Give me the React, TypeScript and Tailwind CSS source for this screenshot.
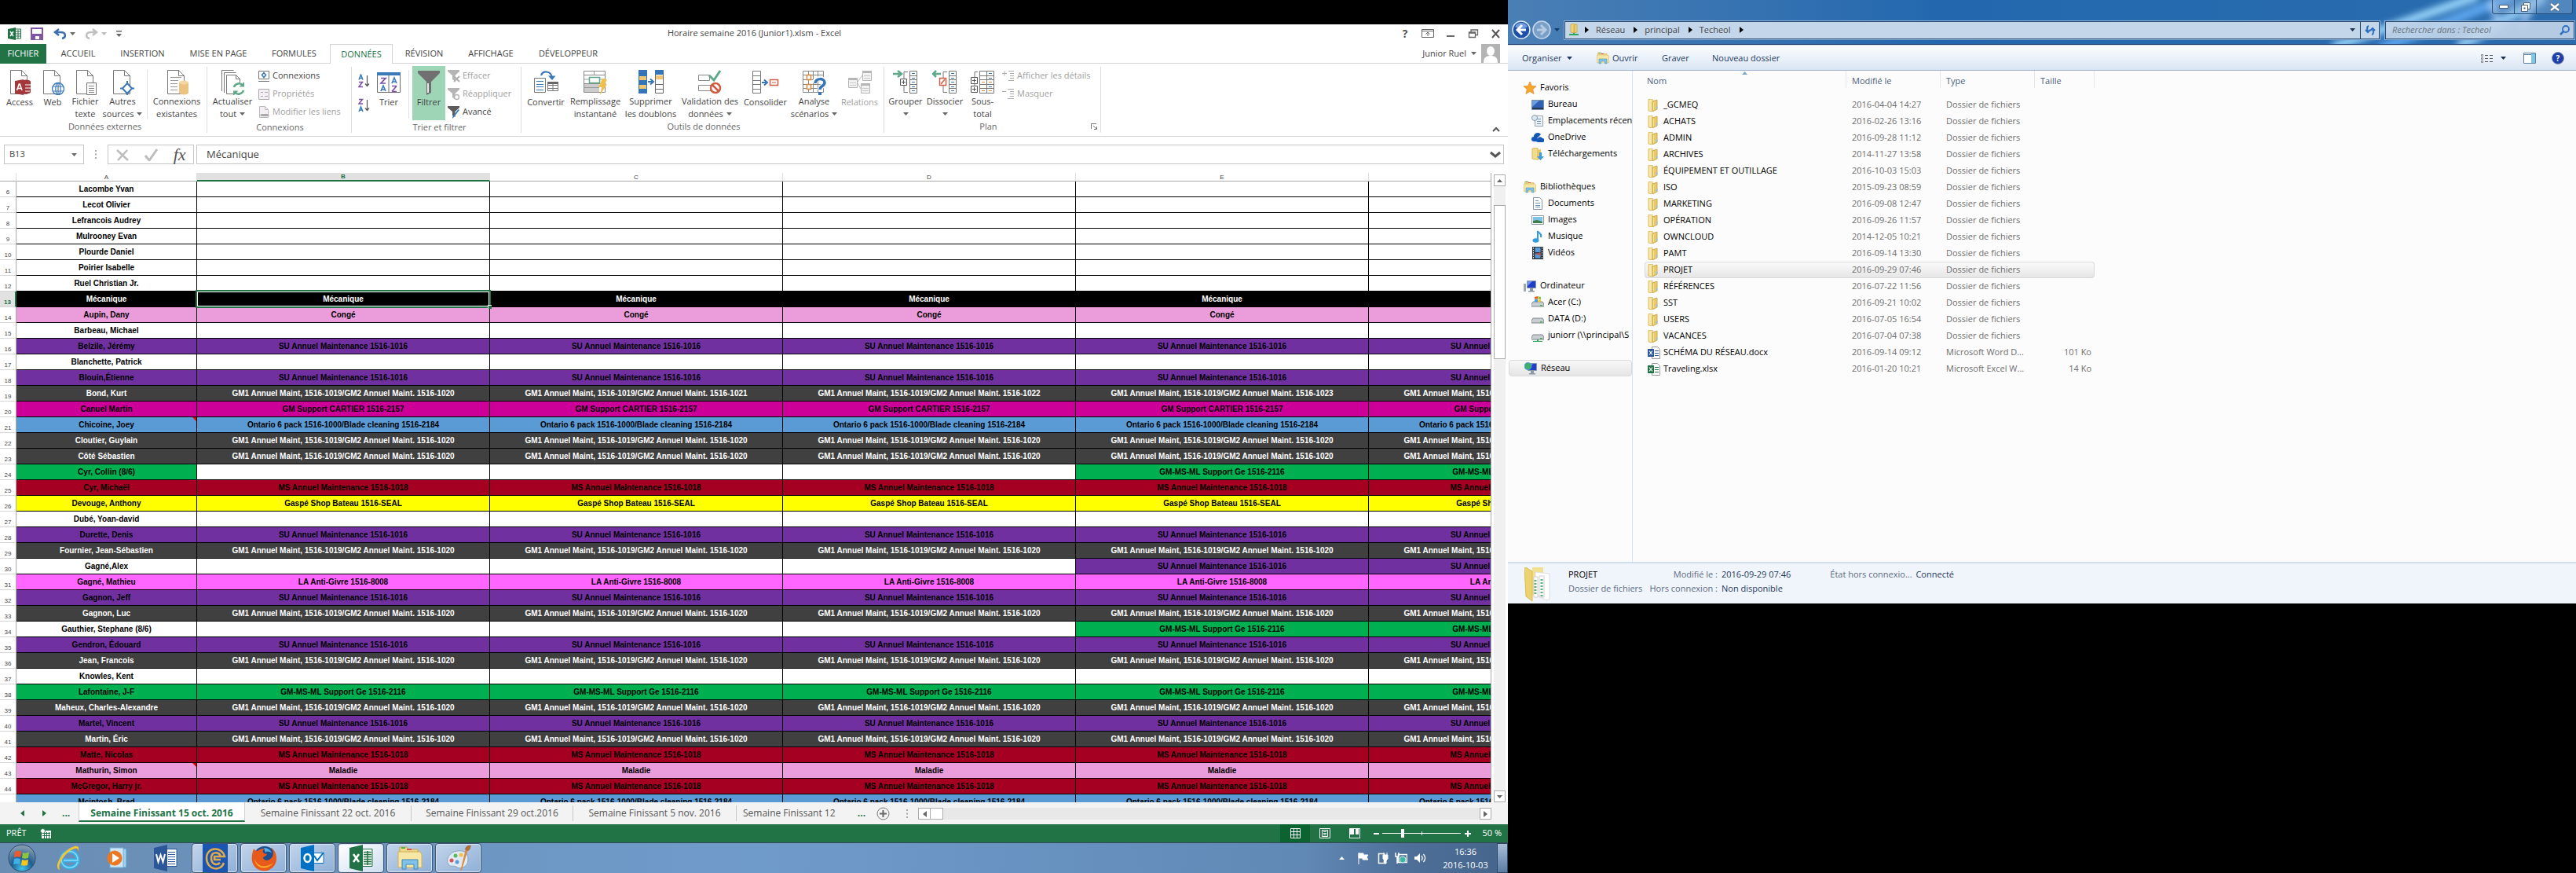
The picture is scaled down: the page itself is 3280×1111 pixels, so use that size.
import React from "react";
import type { ReactNode } from "react";
import clsx from "clsx";

type Children = { children?: ReactNode };
type SvgProps = Children & { w: number; h: number; box?: string };

const Svg = ({ w, h, box, children }: SvgProps) => (
  <svg width={w} height={h} viewBox={box ?? `0 0 ${w} ${h}`} fill="none" aria-hidden="true" className="shrink-0">
    {children}
  </svg>
);

const Caret = ({ color = "#666", up }: { color?: string; up?: boolean }) => (
  <Svg w={7} h={4}>
    <path d={up ? "M0 4h7L3.5 0z" : "M0 0h7L3.5 4z"} fill={color} />
  </Svg>
);

/* ------------------------ RIBBON ICONS ----------------------- */
const Page = () => <path d="M4.500 .5h14l7 7v23h-21zM18.500 .5v7h7" fill="#fff" stroke="#777" />;

const AccessIcon = () => (
  <Svg w={32} h={32}>
    <Page />
    <ellipse cx="24" cy="15" rx="6" ry="2.500" fill="#a4373a" />
    <path d="M18 15h12v13a6 2.500 0 0 1-12 0z" fill="#a4373a" />
    <path d="M23 19h7M23 23h7M23 27h6" stroke="#fff" />
    <path d="M10 14l11-2v20l-11-2z" fill="#a4373a" />
    <path d="M12.500 26l2.800-8h1l2.700 8M13.500 23.500h4.500" stroke="#fff" strokeWidth="1.600" />
  </Svg>
);

const WebIcon = () => (
  <Svg w={32} h={32}>
    <Page />
    <circle cx="23" cy="24" r="7.500" fill="#fff" stroke="#3a78b8" strokeWidth="1.300" />
    <ellipse cx="23" cy="24" rx="3.200" ry="7.500" stroke="#3a78b8" strokeWidth="1.200" />
    <path d="M16 21h14M16 27h14M23 17v14" stroke="#3a78b8" strokeWidth="1.200" />
  </Svg>
);

const TextFileIcon = () => (
  <Svg w={32} h={32}>
    <Page />
    <path d="M17.500 16.500h12v15h-12z" fill="#fff" stroke="#777" />
    <path d="M20 20.500h7M20 23.500h7M20 26.500h7M20 28.500h7" stroke="#888" />
  </Svg>
);

const SourcesIcon = () => (
  <Svg w={32} h={32}>
    <Page />
    <path d="M22 17l6 6.500-6 6.500-6-6.500z" fill="#fff" stroke="#3a78b8" strokeWidth="2" />
    <path d="M22 14v4M22 28v4M13 23.500h4M27 23.500h4" stroke="#3a78b8" strokeWidth="2" />
  </Svg>
);

const ExistingIcon = () => (
  <Svg w={32} h={32}>
    <Page />
    <path d="M8 9.500h14M8 13.500h10M8 17.500h9M8 21.500h9M8 25.500h9" stroke="#999" />
    <path d="M19 16v13a6 2.500 0 0 0 12 0V16z" fill="#eac282" />
    <ellipse cx="25" cy="16" rx="6" ry="2.500" fill="#f3d6a4" />
  </Svg>
);

const RefreshIcon = () => (
  <Svg w={32} h={32}>
    <path d="M2.500 27V.5h15M5.500 29V3.500h15" stroke="#777" />
    <path d="M8.500 6.500h12l5 5v19h-17zM20.500 6.500v5h5" fill="#fff" stroke="#777" />
    <circle cx="24" cy="24" r="8" fill="#fff" />
    <path d="M18 22a6.500 6.500 0 0 1 11-2.500M30 26a6.500 6.500 0 0 1-11 2.500" stroke="#5fa98a" strokeWidth="2.500" />
    <path d="M31 15v6.500h-6.500zM17 33v-6.500h6.500z" fill="#5fa98a" />
  </Svg>
);

const SortBigIcon = () => (
  <Svg w={30} h={28}>
    <path d="M.5 1.500h29v25H.5z" fill="#fff" stroke="#6d6d6d" />
    <path d="M0 1h30v4H0z" fill="#3a78b8" />
    <path d="M15 5v22" stroke="#6d6d6d" />
    <path d="M5 8.500h6L5 15h6M19 25.500h6M25 18.500h-6M25 18.500l-6 7" stroke="#7b4fa8" strokeWidth="1.700" />
    <path d="M5 25l3-7 3 7M6 23h4M19 15l3-7 3 7M20 13h4" stroke="#3a78b8" strokeWidth="1.600" />
  </Svg>
);

const SortIcon = ({ desc }: { desc?: boolean }) => (
  <Svg w={16} h={18}>
    <path
      d={desc ? "M1 17l2.500-6L6 17M2 15h3" : "M1 7.500L3.500 1 6 7.500M2 5.500h3"}
      stroke="#3a78b8"
      strokeWidth="1.500"
    />
    <path d={desc ? "M1 1.500h4.500L1 7h5" : "M1 10.500h4.500L1 16.500h5"} stroke="#7b4fa8" strokeWidth="1.500" />
    <path d="M11.500 2v13M9 12.500l2.500 3 2.500-3" stroke="#555" strokeWidth="1.200" />
  </Svg>
);

const FunnelIcon = () => (
  <Svg w={30} h={32}>
    <path d="M1 1h28v3L18 15v14l-6 3V15L1 4z" fill="#707070" />
    <path d="M14 17v12" stroke="#e8e8e8" strokeWidth="2" />
  </Svg>
);

const FunnelSmall = ({ kind }: { kind: "clear" | "again" | "more" }) => (
  <Svg w={16} h={16}>
    <path d="M0 0h15v2L9.500 7v7L6 12V7L0 2z" fill={kind === "more" ? "#5c5c5c" : "#b5b5b5"} />
    {kind === "clear" && <path d="M8 8l7 7M15 8l-7 7" stroke="#b0b0b0" strokeWidth="2" />}
    {kind === "again" && <circle cx="11.500" cy="11.500" r="3" fill="#fff" stroke="#b5b5b5" strokeWidth="1.500" />}
    {kind === "more" && <path d="M15 5l-7 9-2 2 .5-3 7-9z" fill="#3a78b8" />}
  </Svg>
);

const ConvertIcon = () => (
  <Svg w={32} h={32}>
    <path d="M1.500 10.500h14v18h-14z" fill="#fff" stroke="#777" />
    <path d="M4 14.500h9M4 18.500h9M4 21.500h9M4 25.500h9" stroke="#3a78b8" />
    <path d="M18.500 15.500h13v11h-13zM25 15v12M18 19.500h13M18 23.500h13" stroke="#777" />
    <path d="M18 15h14v3H18z" fill="#666" />
    <path d="M10 7c2-6 12-7 14 3" stroke="#3a78b8" strokeWidth="2.200" />
    <path d="M19 7.500h9.500L24 13z" fill="#3a78b8" />
  </Svg>
);

const FlashIcon = () => (
  <Svg w={32} h={32}>
    <path d="M1.500 1.500h27v27h-27zM1 6.500h28M1 17.500h28" stroke="#888" />
    <path d="M2 18h19v10H2z" fill="#ccc" />
    <path d="M1 22.500h20M14.500 1v6M1 12h27" stroke="#999" />
    <path d="M8.500 9.500h13v7h-13z" fill="#fff" stroke="#5fa98a" strokeWidth="1.500" />
    <path d="M25 11l6 1-3 6h3L22 32l2-10h-4z" fill="#f0c04f" />
  </Svg>
);

const DedupeIcon = () => (
  <Svg w={32} h={32}>
    <path d="M0 0h11v30H0z" fill="#3574b6" />
    <path d="M1 8h9v5H1zM1 19h9v5H1z" fill="#f0c673" />
    <path d="M21.500 .5h10v29h-10z" fill="#fff" stroke="#666" />
    <path d="M21 0h11v6H21z" fill="#3574b6" />
    <path d="M22 7h9v5h-9z" fill="#f0c673" />
    <path d="M21 18.500h11M21 24.500h11" stroke="#666" />
    <path d="M12 15h6M15 11.500l4 3.500-4 3.500" stroke="#3574b6" strokeWidth="2" />
  </Svg>
);

const ValidateIcon = () => (
  <Svg w={32} h={32}>
    <path d="M1.500 6.500h14v7h-14zM1.500 19.500h16v7h-16z" fill="#fff" stroke="#888" />
    <path d="M15 7l6 6L29 1" stroke="#5fa98a" strokeWidth="3" />
    <circle cx="23" cy="23" r="6" fill="#fff" stroke="#cf5b43" strokeWidth="2.500" />
    <path d="M19 19l8 8" stroke="#cf5b43" strokeWidth="2.500" />
  </Svg>
);

const ConsolidateIcon = () => (
  <Svg w={34} h={30}>
    <path d="M.5 .5h10v28H.5zM0 6.500h11M0 12.500h11M0 17.500h11M0 23.500h11" stroke="#777" />
    <path d="M12 15h5M15 11.500l4 3.500-4 3.500" stroke="#3574b6" strokeWidth="2" />
    <path d="M22.500 11.500h10v7h-10z" fill="#fff" stroke="#cf5b43" strokeWidth="1.500" />
    <path d="M25 15h5" stroke="#cf5b43" />
  </Svg>
);

const WhatIfIcon = () => (
  <Svg w={32} h={32}>
    <path d="M1.500 1.500h26v27h-26zM1 6.500h27M1 12.500h27M1 18.500h27M1 23.500h20M8.500 1v28M14.500 1v28M20.500 1v28" stroke="#888" />
    <path d="M6.500 6.500h5v6h-5zM6.500 18.500h5v6h-5z" fill="#fff" stroke="#d8873c" strokeWidth="1.500" />
    <path d="M16 17c0-8 13-8 13-1 0 5-6 4-6 9" stroke="#fff" strokeWidth="6" />
    <path d="M17 17c0-7 12-7 12-1 0 5-6 4-6 9" stroke="#3574b6" strokeWidth="3.500" />
    <path d="M21 28h4v4h-4z" fill="#3574b6" />
  </Svg>
);

const RelationsIcon = () => (
  <Svg w={32} h={32}>
    <path d="M13 15l6-8M13 17l4 7" stroke="#bbb" />
    <path d="M1.500 10.500h11v12h-11zM19.500 1.500h11v12h-11zM17.500 17.500h11v12h-11z" fill="#f2f2f2" stroke="#b5b5b5" />
    <path d="M1 10h12v3H1zM19 1h12v3H19zM17 17h12v3H17z" fill="#b5b5b5" />
    <path d="M3 16.500h8M3 19.500h8M21 7.500h8M21 10.500h8M19 23.500h8M19 26.500h8" stroke="#c8c8c8" />
  </Svg>
);

const OutlineIcon = ({ mode }: { mode: "group" | "ungroup" | "subtotal" }) => (
  <Svg w={32} h={32}>
    <path d="M21.500 1.500h9v28h-9zM21 7.500h10M21 12.500h10M21 18.500h10M21 23.500h10" fill="#fff" stroke="#777" />
    <path d="M24 4.500h4M24 10.500h4M24 15.500h4M24 21.500h4M24 26.500h4" stroke="#3574b6" />
    {mode === "group" && (
      <>
        <path d="M19 2.500h-5v9M14 19v9.500h5" stroke="#777" />
        <path d="M9.500 11.500h8v8h-8zM11 15.500h5M13.500 13v5" fill="#fff" stroke="#555" />
        <path d="M0 5h9M6 1l5 4-5 4" stroke="#5fa98a" strokeWidth="2.500" />
      </>
    )}
    {mode === "ungroup" && (
      <>
        <path d="M19 2.500h-5v9M14 19v9.500h5" stroke="#777" />
        <path d="M9.500 10.500h8v9h-8z" fill="#fff" stroke="#cf5b43" strokeWidth="1.500" />
        <path d="M11 18l5-6" stroke="#cf5b43" strokeWidth="1.500" />
        <path d="M2 5h9M5 1L1 5l4 4" stroke="#5fa98a" strokeWidth="2.500" />
      </>
    )}
    {mode === "subtotal" && (
      <>
        <path d="M12.500 1.500h9v28h-9zM12 7.500h10M12 12.500h10M12 18.500h10M12 23.500h10M10 2.500H6V10M6 18v3" fill="#fff" stroke="#777" />
        <path d="M15 15.500h4M24 15.500h4M15 26.500h4M24 26.500h4" stroke="#d8873c" />
        <path d="M1.500 9.500h8v8h-8zM1.500 20.500h8v8h-8zM3 13.500h5M5.500 11v5M3 24.500h5M5.500 22v5" fill="#fff" stroke="#555" />
      </>
    )}
  </Svg>
);

const LinkIcon = ({ kind }: { kind: "conn" | "props" | "edit" | "show" | "hide" }) => (
  <Svg w={16} h={16}>
    {kind === "conn" && (
      <>
        <path d="M1.500 1.500h13v10h-13zM1 14.500h14" fill="#fff" stroke="#777" />
        <path d="M8 3.500l2.500 3L8 9.500l-2.500-3z" stroke="#3574b6" strokeWidth="1.500" />
      </>
    )}
    {kind === "props" && (
      <>
        <path d="M1.500 1.500h13v13h-13z" fill="#f3eff5" stroke="#aaa" />
        <path d="M4 5.500h3M9 5.500h4M4 10.500h3M9 10.500h4" stroke="#aaa" />
      </>
    )}
    {kind === "edit" && (
      <>
        <path d="M2.500 .5h7l4 4v10h-11zM9.500 .5v4h4" fill="#f3eff5" stroke="#bbb" />
        <path d="M5 11.500h4M9 11.500h4" stroke="#aaa" strokeWidth="3" strokeLinecap="round" />
      </>
    )}
    {kind === "show" && <path d="M0 4.500h6M3 1.500v6M8 1.500h7M10 4.500h5M10 7.500h5M10 10.500h5M8 13.500h7" stroke="#aaa" />}
    {kind === "hide" && <path d="M0 4.500h5M7 1.500h8M10 4.500h5M10 7.500h5M10 10.500h5M7 13.500h8" stroke="#aaa" />}
  </Svg>
);

/* ------------------------ RIBBON PARTS ----------------------- */
type BigProps = { icon: ReactNode; lines: string[]; caret?: boolean; className: string; muted?: boolean };

const BigButton = ({ icon, lines, caret, className, muted }: BigProps) => (
  <button
    disabled={muted}
    className={clsx(
      "mt-[3px] flex h-[69px] shrink-0 flex-col items-center whitespace-nowrap pt-1 leading-4",
      muted ? "text-[#a0a0a0]" : "text-[#444]",
      className,
    )}>
    <span className="flex h-[34px] items-center">{icon}</span>
    {lines.map((line, i) => (
      <span key={line} className="flex h-4 items-center gap-1">
        {line}
        {caret && i === lines.length - 1 && <Caret />}
      </span>
    ))}
  </button>
);

const SmallButton = ({ icon, label, muted }: { icon: ReactNode; label: string; muted?: boolean }) => (
  <button
    disabled={muted}
    className={clsx("flex h-[23px] items-center gap-[3px] whitespace-nowrap", muted ? "text-[#a0a0a0]" : "text-[#444]")}>
    {icon}
    {label}
  </button>
);

const Group = ({ label, className, children, launcher }: Children & { label: string; className: string; launcher?: boolean }) => (
  <section aria-label={label} className={clsx("my-1 flex shrink-0 flex-col border-r border-[#dcdcdc]", className)}>
    <div className="-mt-1 flex h-[76px]">{children}</div>
    <div className="flex h-4 items-center justify-center text-[#666]">
      <span className={clsx(launcher && "ml-auto")}>{label}</span>
      {launcher && (
        <button aria-label="Options du plan" className="mr-1 ml-auto">
          <Svg w={8} h={8}>
            <path d="M.5 7V.5H7M3 3l4 4M7.500 4v3.500H4" stroke="#777" />
          </Svg>
        </button>
      )}
    </div>
  </section>
);

const ribbonTabs = [
  { name: "FICHIER", cls: "w-[59px] bg-[#217346] text-white" },
  { name: "ACCUEIL", cls: "w-[81px] text-[#444]" },
  { name: "INSERTION", cls: "w-[83px] text-[#444]" },
  { name: "MISE EN PAGE", cls: "w-[110px] text-[#444]" },
  { name: "FORMULES", cls: "w-[83px] text-[#444]" },
  { name: "DONNÉES", cls: "ml-1 w-[80px] border border-b-0 border-[#d4d4d4] bg-white text-[#217346]" },
  { name: "RÉVISION", cls: "w-[80px] text-[#444]" },
  { name: "AFFICHAGE", cls: "w-[90px] text-[#444]" },
  { name: "DÉVELOPPEUR", cls: "w-[107px] text-[#444]" },
];

const TitleBar = () => (
  <header className="flex h-[25px] items-center bg-white pr-[7px] pb-[2px] pl-[10px] text-[11px]">
    <div className="flex w-[150px] items-center">
      <Svg w={17} h={16}>
        <path d="M9 2h7.500v12H9z" fill="#fff" stroke="#217346" />
        <path d="M10 5h6M10 8h6M10 11h6M13 3v11" stroke="#217346" />
        <path d="M0 2l10-2v16L0 14z" fill="#217346" />
        <path d="M3 5l4 6M7 5l-4 6" stroke="#fff" strokeWidth="1.500" />
      </Svg>
      <button aria-label="Enregistrer" className="ml-3">
        <Svg w={16} h={16}>
          <path d="M1 1h14v14H1z" fill="#fff" stroke="#8055a5" strokeWidth="2" />
          <path d="M1 8h14v7H1z" fill="#8055a5" />
          <path d="M6 11h5v4H6z" fill="#fff" />
        </Svg>
      </button>
      <button aria-label="Annuler" className="ml-[13px] flex items-center gap-1">
        <Svg w={17} h={14}>
          <path d="M3 5h6c8 0 7 7 2 8M7 1L2 5l5 4" stroke="#3a6fb0" strokeWidth="2.500" />
        </Svg>
        <Caret />
      </button>
      <button aria-label="Rétablir" className="ml-3 flex items-center gap-1">
        <Svg w={17} h={14}>
          <path d="M14 5H8C0 5 1 12 6 13M10 1l5 4-5 4" stroke="#c0c0c0" strokeWidth="2.500" />
        </Svg>
        <Caret color="#bbb" />
      </button>
      <button aria-label="Personnaliser la barre d'accès rapide" className="ml-3">
        <Svg w={7} h={8}>
          <path d="M0 0h7v1.500H0zM0 4h7L3.500 8z" fill="#666" />
        </Svg>
      </button>
    </div>
    <h1 className="flex-1 pr-[20px] text-center text-[#444]">Horaire semaine 2016 (Junior1).xlsm - Excel</h1>
    <div className="flex items-center gap-[13px] text-[#555]">
      <button aria-label="Aide" className="w-4 text-[14px] leading-4 font-bold">
        ?
      </button>
      <button aria-label="Options du ruban">
        <Svg w={16} h={12}>
          <path d="M.5 .5h15v10H.5zM1 2.500h14M8 9V4M5.500 6.500L8 4l2.500 2.500" stroke="#666" />
        </Svg>
      </button>
      <button aria-label="Réduire">
        <Svg w={16} h={12}>
          <path d="M3 8h10v2H3z" fill="#666" />
        </Svg>
      </button>
      <button aria-label="Restaurer">
        <Svg w={16} h={12}>
          <path d="M2.500 4h8v6.500h-8zM5 3.500V1h8.500v6.500H11M2 5h9" stroke="#666" strokeWidth="1.300" />
        </Svg>
      </button>
      <button aria-label="Fermer">
        <Svg w={16} h={12}>
          <path d="M3 1l9 10M12 1L3 11" stroke="#555" strokeWidth="2" />
        </Svg>
      </button>
    </div>
  </header>
);

const Ribbon = () => (
  <>
    <nav className="flex h-[25px] border-b border-[#d4d4d4] bg-white pr-[10px] text-[11px]">
      {ribbonTabs.map((tab) => (
        <button key={tab.name} className={clsx("-mb-px h-[25px] shrink-0 whitespace-nowrap", tab.cls)}>
          {tab.name}
        </button>
      ))}
      <button className="ml-auto flex items-center gap-[6px] text-[#444]">
        Junior Ruel
        <Caret />
        <Svg w={24} h={24}>
          <path d="M0 0h24v24H0z" fill="#b3b3b3" />
          <ellipse cx="12" cy="9" rx="5" ry="6" fill="#fff" />
          <path d="M3 24c0-7 3-8 7-9h4c4 1 7 2 7 9z" fill="#fff" />
        </Svg>
      </button>
    </nav>

    <div className="flex h-[93px] border-b border-[#d4d4d4] bg-white text-[11px]">
      <Group label="Données externes" className="w-[264px] pl-1">
        <BigButton className="w-[42px]" icon={<AccessIcon />} lines={["Access"]} />
        <BigButton className="w-[42px]" icon={<WebIcon />} lines={["Web"]} />
        <BigButton className="w-[41px]" icon={<TextFileIcon />} lines={["Fichier", "texte"]} />
        <BigButton className="w-[54px]" icon={<SourcesIcon />} lines={["Autres", "sources"]} caret />
        <div className="mx-1 mt-2 h-[62px] w-px bg-[#e2e2e2]" />
        <BigButton className="w-[66px]" icon={<ExistingIcon />} lines={["Connexions", "existantes"]} />
      </Group>
      <Group label="Connexions" className="w-[184px] pl-[2px]">
        <BigButton className="w-[60px]" icon={<RefreshIcon />} lines={["Actualiser", "tout"]} caret />
        <div className="ml-[2px] pt-1">
          <SmallButton icon={<LinkIcon kind="conn" />} label="Connexions" />
          <SmallButton icon={<LinkIcon kind="props" />} label="Propriétés" muted />
          <SmallButton icon={<LinkIcon kind="edit" />} label="Modifier les liens" muted />
        </div>
      </Group>
      <Group label="Trier et filtrer" className="w-[216px] pl-2">
        <div className="flex w-4 flex-col gap-[13px] pt-[13px]">
          <button aria-label="Trier de A à Z">
            <SortIcon />
          </button>
          <button aria-label="Trier de Z à A">
            <SortIcon desc />
          </button>
        </div>
        <BigButton className="w-[46px]" icon={<SortBigIcon />} lines={["Trier"]} />
        <div className="mr-1 ml-[2px] mt-2 h-[62px] w-px bg-[#e2e2e2]" />
        <BigButton className="w-[42px] bg-[#9fd5b7]" icon={<FunnelIcon />} lines={["Filtrer"]} />
        <div className="ml-[3px] pt-1">
          <SmallButton icon={<FunnelSmall kind="clear" />} label="Effacer" muted />
          <SmallButton icon={<FunnelSmall kind="again" />} label="Réappliquer" muted />
          <SmallButton icon={<FunnelSmall kind="more" />} label="Avancé" />
        </div>
      </Group>
      <Group label="Outils de données" className="w-[462px] pl-[3px]">
        <BigButton className="w-[56px]" icon={<ConvertIcon />} lines={["Convertir"]} />
        <BigButton className="w-[70px]" icon={<FlashIcon />} lines={["Remplissage", "instantané"]} />
        <BigButton className="w-[71px]" icon={<DedupeIcon />} lines={["Supprimer", "les doublons"]} />
        <BigButton className="w-[80px]" icon={<ValidateIcon />} lines={["Validation des", "données"]} caret />
        <BigButton className="w-[61px]" icon={<ConsolidateIcon />} lines={["Consolider"]} />
        <BigButton className="w-[63px]" icon={<WhatIfIcon />} lines={["Analyse", "scénarios"]} caret />
        <BigButton className="w-[53px]" icon={<RelationsIcon />} lines={["Relations"]} muted />
      </Group>
      <Group label="Plan" className="w-[276px] pl-[2px]" launcher>
        <BigButton className="w-[50px]" icon={<OutlineIcon mode="group" />} lines={["Grouper", ""]} caret />
        <BigButton className="w-[50px]" icon={<OutlineIcon mode="ungroup" />} lines={["Dissocier", ""]} caret />
        <BigButton className="w-[46px]" icon={<OutlineIcon mode="subtotal" />} lines={["Sous-", "total"]} />
        <div className="ml-[2px] pt-1">
          <SmallButton icon={<LinkIcon kind="show" />} label="Afficher les détails" muted />
          <SmallButton icon={<LinkIcon kind="hide" />} label="Masquer" muted />
        </div>
      </Group>
      <button aria-label="Réduire le ruban" className="mt-auto mr-[10px] mb-[5px] ml-auto">
        <Svg w={10} h={7}>
          <path d="M1 6l4-4 4 4" stroke="#555" strokeWidth="2" />
        </Svg>
      </button>
    </div>
  </>
);

const FormulaBar = () => (
  <div className="flex bg-white pt-[10px] pr-[5px] pb-[11px] pl-[5px] text-[#444]">
    <div className="flex h-[25px] w-[102px] items-center border border-[#c6c6c6] pr-2 pl-[6px]">
      <input aria-label="Zone Nom" defaultValue="B13" className="w-full min-w-0 text-[11px] outline-none" />
      <Caret />
    </div>
    <div className="flex w-[30px] items-center justify-center">
      <Svg w={2} h={11}>
        <path d="M0 0h2v2H0zM0 4.500h2v2H0zM0 9h2v2H0z" fill="#aaa" />
      </Svg>
    </div>
    <div className="flex h-[25px] w-[110px] items-center justify-around border border-[#c6c6c6]">
      <button aria-label="Annuler la saisie">
        <Svg w={18} h={16}>
          <path d="M2 2l14 13M15 2L3 15" stroke="#bdbdbd" strokeWidth="2.500" />
        </Svg>
      </button>
      <button aria-label="Entrer">
        <Svg w={18} h={16}>
          <path d="M1 9l5 6L16 1" stroke="#bdbdbd" strokeWidth="3" />
        </Svg>
      </button>
      <button aria-label="Insérer une fonction" className="font-['Liberation_Serif',serif] text-[22px] leading-5 text-[#555] italic">
        fx
      </button>
    </div>
    <div className="ml-[3px] flex h-[25px] flex-1 items-center border border-[#c6c6c6] pr-[3px] pl-3">
      <input aria-label="Barre de formule" defaultValue="Mécanique" className="min-w-0 flex-1 text-[13px] outline-none" />
      <Svg w={14} h={9}>
        <path d="M1 2l6 5 6-5" stroke="#555" strokeWidth="3" />
      </Svg>
    </div>
  </div>
);

/* ------------------------ SHEET ----------------------- */
const SU = "SU Annuel Maintenance 1516-1016";
const MS = "MS Annuel Maintenance 1516-1018";
const GE = "GM-MS-ML Support Ge 1516-2116";
const ONT = "Ontario 6 pack 1516-1000/Blade cleaning 1516-2184";
const CARTIER = "GM Support CARTIER 1516-2157";
const GM = "GM1 Annuel Maint, 1516-1019/GM2 Annuel Maint. 1516-";

const fills = {
  none: "bg-white text-black",
  black: "bg-black text-white",
  pink: "bg-[#eb9cda] text-black",
  purple: "bg-[#7030a0] text-black",
  gray: "bg-[#404040] text-white",
  magenta: "bg-[#cc0099] text-black",
  blue: "bg-[#5b9bd5] text-black",
  green: "bg-[#00b050] text-black",
  red: "bg-[#a50021] text-black",
  yellow: "bg-[#ffff00] text-black",
  rose: "bg-[#ff66ff] text-black",
};
type Fill = keyof typeof fills;
type Row = {
  name: string;
  fill: Fill;
  cells: string[];
  nameFill?: Fill;
  lateFill?: Fill;
  note?: boolean;
};

const same = (text: string) => [text, text, text, text, text];
// B to E only
const week = (text: string) => [text, text, text, text, ""];
const late = (text: string) => ["", "", "", text, text];
const plain = (name: string): Row => ({ name, fill: "none", cells: same("") });
const gm = (name: string): Row => ({ name, fill: "gray", cells: same(GM + "1020") });
const su = (name: string): Row => ({ name, fill: "purple", cells: same(SU) });
const ms = (name: string): Row => ({ name, fill: "red", cells: same(MS) });

const firstRow = 6;
const rows: Row[] = [
  plain("Lacombe Yvan"),
  plain("Lecot Olivier"),
  plain("Lefrancois Audrey"),
  plain("Mulrooney Evan"),
  plain("Plourde Daniel"),
  plain("Poirier Isabelle"),
  plain("Ruel Christian Jr."),
  { name: "Mécanique", fill: "black", cells: week("Mécanique") },
  { name: "Aupin, Dany", fill: "pink", cells: week("Congé") },
  plain("Barbeau, Michael"),
  su("Belzile, Jérémy"),
  plain("Blanchette, Patrick"),
  su("Blouin,Étienne"),
  { name: "Bond, Kurt", fill: "gray", cells: ["1020", "1021", "1022", "1023", "1024"].map((n) => GM + n) },
  { name: "Canuel Martin", fill: "magenta", cells: same(CARTIER) },
  { name: "Chicoine, Joey", fill: "blue", cells: same(ONT), note: true },
  gm("Cloutier, Guylain"),
  gm("Côté Sébastien"),
  { name: "Cyr, Collin (8/6)", fill: "none", nameFill: "green", lateFill: "green", cells: late(GE) },
  ms("Cyr, Michaël"),
  { name: "Devouge, Anthony", fill: "yellow", cells: same("Gaspé Shop Bateau 1516-SEAL") },
  plain("Dubé, Yoan-david"),
  su("Durette, Denis"),
  gm("Fournier, Jean-Sébastien"),
  { name: "Gagné,Alex", fill: "none", lateFill: "purple", cells: late(SU) },
  { name: "Gagné, Mathieu", fill: "rose", cells: same("LA Anti-Givre 1516-8008") },
  su("Gagnon, Jeff"),
  gm("Gagnon, Luc"),
  { name: "Gauthier, Stephane (8/6)", fill: "none", lateFill: "green", cells: late(GE) },
  su("Gendron, Édouard"),
  gm("Jean, Francois"),
  plain("Knowles, Kent"),
  { name: "Lafontaine, J-F", fill: "green", cells: same(GE) },
  gm("Maheux, Charles-Alexandre"),
  su("Martel, Vincent"),
  gm("Martin, Éric"),
  ms("Matte, Nicolas"),
  { name: "Mathurin, Simon", fill: "pink", cells: week("Maladie"), note: true },
  ms("McGregor, Harry jr."),
  { name: "Mcintosh, Brad", fill: "blue", cells: same(ONT) },
];

const Sheet = () => (
  <main className="flex min-h-0 flex-1 bg-white">
    <div className="min-w-0 flex-1 overflow-hidden border-r border-[#ababab]">
      <table className="w-[2116px] table-fixed border-separate border-spacing-0 text-center font-['Liberation_Sans',Arial,sans-serif] text-[10px] leading-[18px] font-bold">
        <colgroup>
          <col className="w-[21px]" />
          <col className="w-[230px]" />
          {["B", "C", "D", "E", "F"].map((c) => (
            <col key={c} className="w-[373px]" />
          ))}
        </colgroup>
        <thead>
          <tr className="h-[11px] text-[8px] leading-[9px] text-[#444]">
            <td className="border-r border-b border-[#ababab] border-r-[#e0e0e0]" />
            {["A", "B", "C", "D", "E", ""].map((c) => (
              <th
                key={c}
                scope="col"
                className={clsx(
                  "border-r border-r-[#e0e0e0] p-0",
                  c === "B"
                    ? "border-b-2 border-b-[#217346] bg-[#e1e1e1] leading-[8px] font-bold text-[#217346]"
                    : "border-b border-b-[#ababab] font-normal",
                )}>
                {c}
              </th>
            ))}
          </tr>
        </thead>
        <tbody>
          {rows.map((row, i) => {
            const n = firstRow + i;
            const active = n === 13;
            return (
              <tr key={row.name} className="h-5">
                <th
                  scope="row"
                  className={clsx(
                    "h-5 border-b border-b-[#d8d8d8] p-0 align-bottom text-[8px] leading-[10px]",
                    active
                      ? "border-r-2 border-r-[#217346] bg-[#e1e1e1] text-[#217346]"
                      : "border-r border-r-[#ababab] font-normal text-[#444]",
                  )}>
                  {n}
                </th>
                <td className={clsx("relative h-5 border-r border-b border-black p-0", fills[row.nameFill ?? row.fill])}>
                  {row.name}
                  {row.note && (
                    <span className="absolute top-0 right-0 border-t-[5px] border-l-[5px] border-t-[#e00000] border-l-transparent" />
                  )}
                </td>
                {row.cells.map((text, c) => (
                  <td
                    key={c}
                    className={clsx(
                      "relative h-5 border-r border-b border-black p-0 whitespace-nowrap",
                      fills[c > 2 && row.lateFill ? row.lateFill : row.fill],
                    )}>
                    {text}
                    {active && c === 0 && (
                      <span className="absolute -inset-[2px] z-10 border-2 border-[#217346] outline-1 -outline-offset-3 outline-white">
                        <span className="absolute -right-[3px] -bottom-[3px] h-[5px] w-[5px] border-t border-l border-white bg-[#217346]" />
                      </span>
                    )}
                  </td>
                ))}
              </tr>
            );
          })}
        </tbody>
      </table>
    </div>
    <div className="mt-[2px] mr-[3px] ml-[3px] flex w-[15px] flex-col bg-[#f0f0f0]">
      <button aria-label="Défiler vers le haut" className="flex h-[15px] items-center justify-center border border-[#ababab] bg-white">
        <Caret up />
      </button>
      <div className="mt-6 h-[196px] border border-[#ababab] bg-white" />
      <button aria-label="Défiler vers le bas" className="mt-auto flex h-[15px] items-center justify-center border border-[#ababab] bg-white">
        <Caret />
      </button>
    </div>
  </main>
);

const ArrowH = ({ left, color = "#666" }: { left?: boolean; color?: string }) => (
  <Svg w={5} h={8}>
    <path d={left ? "M5 0v8L0 4z" : "M0 0v8l5-4z"} fill={color} />
  </Svg>
);

const SheetTabs = () => (
  <div className="flex h-7 shrink-0 bg-[#f3f3f3] text-[12px] whitespace-nowrap text-[#555]">
    <div className="flex w-[100px] shrink-0 items-center pl-[26px]">
      <button aria-label="Feuille précédente" className="w-7">
        <ArrowH left color="#217346" />
      </button>
      <button aria-label="Feuille suivante" className="w-[25px]">
        <ArrowH color="#217346" />
      </button>
      <span className="font-bold text-[#217346]">...</span>
    </div>
    <button className="mb-[3px] w-[212px] shrink-0 border-x border-b-2 border-x-[#d0d0d0] border-b-[#217346] bg-white pt-1 font-bold text-[#217346]">
      Semaine Finissant 15 oct. 2016
    </button>
    <button className="my-1 w-[212px] shrink-0 border-r border-[#c8c8c8]">Semaine Finissant 22 oct. 2016</button>
    <button className="my-1 w-[206px] shrink-0 border-r border-[#c8c8c8]">Semaine Finissant 29 oct.2016</button>
    <button className="my-1 w-[208px] shrink-0 border-r border-[#c8c8c8]">Semaine Finissant 5 nov. 2016</button>
    <button className="my-1 w-[148px] shrink-0 pl-2 text-left">Semaine Finissant 12</button>
    <button aria-label="Autres feuilles" className="w-[22px] font-bold text-[#217346]">
      ...
    </button>
    <button aria-label="Nouvelle feuille" className="flex w-8 items-center justify-center">
      <Svg w={17} h={17}>
        <circle cx="8.500" cy="8.500" r="7.500" stroke="#777" />
        <path d="M8.500 4v9M4 8.500h9" stroke="#666" strokeWidth="2" />
      </Svg>
    </button>
    <div className="flex w-[29px] items-center justify-center">
      <Svg w={2} h={11}>
        <path d="M0 0h2v2H0zM0 4.500h2v2H0zM0 9h2v2H0z" fill="#aaa" />
      </Svg>
    </div>
    <div className="mt-[7px] mr-[21px] flex h-[15px] flex-1 bg-[#e8e8e8]">
      <button aria-label="Défiler à gauche" className="flex w-4 items-center justify-center border border-[#ababab] bg-white">
        <ArrowH left />
      </button>
      <div className="-ml-px w-[17px] border border-[#ababab] bg-white" />
      <button aria-label="Défiler à droite" className="ml-auto flex w-[15px] items-center justify-center border border-[#ababab] bg-white">
        <ArrowH />
      </button>
    </div>
  </div>
);

const StatusBar = () => (
  <footer className="flex h-[23px] shrink-0 items-center bg-[#217346] pr-2 pl-2 text-[11px] text-white">
    <span className="w-[43px]">PRÊT</span>
    <Svg w={14} h={13}>
      <path d="M2 3h12v10H2z" fill="#fff" />
      <path d="M3 6.500h10M3 9.500h10M5.500 5v8M8.500 5v8M11.500 5v8" stroke="#217346" />
      <circle cx="3.500" cy="3.500" r="3" fill="#fff" stroke="#217346" />
    </Svg>
    <div className="ml-auto flex h-full">
      <button aria-label="Normal" className="flex w-[38px] items-center justify-center bg-[#0b6330]">
        <Svg w={13} h={13}>
          <path d="M.5 .5h12v12H.5zM0 4.500h13M0 8.500h13M4.500 0v13M8.500 0v13" stroke="#fff" />
        </Svg>
      </button>
      <button aria-label="Mise en page" className="flex w-[38px] items-center justify-center">
        <Svg w={14} h={13}>
          <path d="M.5 .5h13v12H.5zM3.500 2.500h7v8h-7zM5 4.500h4M5 6.500h4M5 8.500h4" stroke="#fff" />
        </Svg>
      </button>
      <button aria-label="Aperçu des sauts de page" className="flex w-[38px] items-center justify-center">
        <Svg w={14} h={13}>
          <path d="M.5 .5h13v12H.5z" stroke="#fff" />
          <path d="M1 1h5v7H1zM8 1h4v7H8z" fill="#fff" />
        </Svg>
      </button>
    </div>
    <button aria-label="Zoom arrière" className="flex w-4 justify-center">
      <Svg w={7} h={2}>
        <path d="M0 0h7v2H0z" fill="#fff" />
      </Svg>
    </button>
    <div className="relative flex w-[100px] items-center">
      <input
        type="range"
        aria-label="Zoom"
        min={0}
        max={100}
        defaultValue={24}
        className="h-4 w-full appearance-none bg-transparent [&::-webkit-slider-runnable-track]:h-px [&::-webkit-slider-runnable-track]:bg-white [&::-webkit-slider-thumb]:-mt-[5px] [&::-webkit-slider-thumb]:h-[11px] [&::-webkit-slider-thumb]:w-1 [&::-webkit-slider-thumb]:appearance-none [&::-webkit-slider-thumb]:bg-white"
      />
      <span className="absolute left-1/2 h-[5px] w-px bg-white" />
    </div>
    <button aria-label="Zoom avant" className="flex w-[18px] justify-center">
      <Svg w={8} h={8}>
        <path d="M3 0h2v8H3zM0 3h8v2H0z" fill="#fff" />
      </Svg>
    </button>
    <button className="ml-[9px]">50 %</button>
  </footer>
);

/* ------------------------ TASKBAR ----------------------- */
const OfficeIcon = ({ color, children, kind }: Children & { color: string; kind: "text" | "mail" | "grid" }) => (
  <Svg w={30} h={34}>
    {kind !== "mail" && <path d="M15 5.500h14v22H15z" fill="#fff" stroke={color} />}
    {kind === "text" && <path d="M18 9.500h9M18 12.500h9M18 15.500h9M18 18.500h9M18 21.500h9M18 24.500h9" stroke={color} />}
    {kind === "grid" && <path d="M18 9.500h10M18 12.500h10M18 15.500h10M18 18.500h10M18 21.500h10M18 24.500h10M23 8v18" stroke={color} strokeWidth="1.500" />}
    {kind === "mail" && (
      <>
        <path d="M14 10.500h15v13H14z" fill="#fff" stroke={color} />
        <path d="M17 14l4 6 8-10" stroke={color} strokeWidth="2" />
      </>
    )}
    <path d="M0 4l17-4v34L0 30z" fill={color} />
    {children}
  </Svg>
);

const LibraryIcon = ({ size }: { size: "sm" | "lg" }) => (
  <Svg w={size === "lg" ? 32 : 16} h={size === "lg" ? 32 : 16} box="0 0 32 32">
    <path d="M3 2h9l2 3h12v5H3z" fill="#f0d98c" stroke="#c9a648" />
    <path d="M5 2h5v2H5z" fill="#4caf50" />
    <path d="M12 4h6v2h-6z" fill="#d9534f" />
    <path d="M1 8h28l2 3v17H1z" fill="#f7e6a4" stroke="#cfae55" />
    <path d="M6 18h20v12h-5v-6H11v6H6z" fill="#7fc3ea" stroke="#3f88bd" />
  </Svg>
);

const taskButton = "flex h-full w-[59px] items-center justify-center rounded-sm border border-[#3d5675] bg-linear-to-br shadow-[inset_0_0_0_1px_#d5e2f0]";
const taskIdle = "from-[#c3d4e9] to-[#8fb0d8]";

const Taskbar = () => (
  <footer className="flex h-[39px] shrink-0 border-t border-[#33475f] bg-linear-to-r from-[#6a8db3] via-[#6f9bcb] to-[#5c82ae]">
    <button aria-label="Démarrer" className="flex w-14 items-center justify-center">
      <Svg w={36} h={36}>
        <defs>
          <radialGradient id="orb" cx=".5" cy=".9" r=".8">
            <stop offset="0" stopColor="#3fc4e8" />
            <stop offset=".5" stopColor="#1d5f94" />
            <stop offset="1" stopColor="#7f97ad" />
          </radialGradient>
        </defs>
        <circle cx="18" cy="18" r="17" fill="url(#orb)" stroke="#2b4a6b" />
        <path d="M9 10c3-2 6-1 8 0l-1 7c-3-1-5-1-8 0z" fill="#f0592b" />
        <path d="M19 11c3 1 5 1 8-1l-1 8c-3 1-5 1-8 0z" fill="#8cc63f" />
        <path d="M8 19c3-1 5-1 8 0l-1 7c-2-1-5-1-8 0z" fill="#40b0ea" />
        <path d="M18 20c3 1 5 1 8 0l-1 7c-3 1-5 1-8 0z" fill="#fbc41b" />
      </Svg>
    </button>
    <button aria-label="Internet Explorer" className="flex w-[62px] items-center justify-center">
      <Svg w={32} h={34}>
        <path d="M28 22c-3 10-20 10-21-3C7 6 28 4 28 20H10" stroke="#38b0e8" strokeWidth="5" />
        <path d="M28 22c-3 10-20 10-21-3C7 6 28 4 28 20H10" stroke="#8fdcf8" strokeWidth="1.500" />
        <path d="M5 32C-4 30 8 6 24 2c6-1 6 3 4 7 1-4-1-5-4-4C12 9 2 25 5 32z" fill="#f4c430" />
      </Svg>
    </button>
    <button aria-label="Lecteur multimédia" className="flex w-[62px] items-center justify-center">
      <Svg w={26} h={28}>
        <path d="M8 2h17v24H8z" fill="#9fd0ee" stroke="#5b9ac5" />
        <path d="M4 1h17v25H4z" fill="#cfe7f6" stroke="#72aed6" />
        <circle cx="10" cy="14" r="9.500" fill="#ee7722" />
        <path d="M7 8l9 6-9 6z" fill="#fff" />
      </Svg>
    </button>
    <button aria-label="Word" className="mr-[2px] flex w-[62px] items-center justify-center">
      <OfficeIcon color="#2b579a" kind="text">
        <path d="M3 12l2.500 10L8.500 13l3 9L14 12" stroke="#fff" strokeWidth="2" />
      </OfficeIcon>
    </button>
    <div className="flex gap-[3px]">
      <button aria-label="Centre de commande" className={clsx(taskButton, taskIdle)}>
        <Svg w={32} h={36}>
          <path d="M0 0h32v36H0z" fill="#1b55b0" />
          <path d="M27 24c-4 12-22 9-22-6S25 3 28 16H15v4h8M22 24c-4 4-11 2-11-6 0-9 10-8 12-2" stroke="#e0ab4a" strokeWidth="2.500" />
        </Svg>
      </button>
      <button aria-label="Firefox" className={clsx(taskButton, taskIdle)}>
        <Svg w={32} h={34}>
          <circle cx="17" cy="16" r="14" fill="#1c4f8f" />
          <path d="M16 4c5 0 9 3 10 7-3-3-6-3-8-1z" fill="#4fb3e8" />
          <path d="M3 5c1 2 3 3 5 3 3-3 6-3 9-3-3 2-3 4-1 6l4 1c-1 3-5 3-5 5 3 5 9 3 12-2 2-5 0-9-2-12 8 6 9 17 4 24-7 9-20 8-26-1C-1 20 1 11 3 5z" fill="#e8591c" />
          <path d="M4 18c3 9 13 13 24 5-7 10-22 9-24-5z" fill="#f9a825" />
        </Svg>
      </button>
      <button aria-label="Outlook" className={clsx(taskButton, taskIdle)}>
        <OfficeIcon color="#0072c6" kind="mail">
          <ellipse cx="8.500" cy="17" rx="4" ry="5" stroke="#fff" strokeWidth="2.500" />
        </OfficeIcon>
      </button>
      <button aria-label="Excel" className={clsx(taskButton, "from-white to-[#cfdef0]")}>
        <OfficeIcon color="#217346" kind="grid">
          <path d="M5 12l7 10M12 12L5 22" stroke="#fff" strokeWidth="2.500" />
        </OfficeIcon>
      </button>
      <button aria-label="Explorateur Windows" className={clsx(taskButton, taskIdle)}>
        <LibraryIcon size="lg" />
      </button>
      <button aria-label="Paint" className={clsx(taskButton, taskIdle)}>
        <Svg w={32} h={34}>
          <path d="M14 8C4 9-1 19 3 25c3 4 7 1 10 3 4 4 15 1 15-9S22 7 14 8z" fill="#dfeaf4" stroke="#8aa5bf" />
          <circle cx="7" cy="20" r="2.500" fill="#d9534f" />
          <circle cx="12" cy="14" r="2.500" fill="#5cb85c" />
          <circle cx="19" cy="13" r="2.500" fill="#f0c04f" />
          <circle cx="14" cy="22" r="2.500" fill="#5b9bd5" />
          <path d="M28 6l-8 26-2 1 1-3 6-25z" fill="#d98a3c" />
          <path d="M24 6c1-5 5-6 8-5-1 3-1 5-4 7z" fill="#a9713b" />
        </Svg>
      </button>
    </div>
    <div className="ml-auto flex items-center gap-2 bg-linear-to-r from-transparent via-[#4d6f98] to-[#45658c] pl-10 text-white">
      <button aria-label="Icônes cachées" className="mr-2">
        <Caret up color="#fff" />
      </button>
      <Svg w={16} h={16}>
        <path d="M2 1v15M2 2h6v2h6l-2 3 2 3H7V8H2z" fill="#fff" stroke="#fff" />
      </Svg>
      <Svg w={16} h={16}>
        <path d="M3.500 2.500h7v12h-7z" stroke="#fff" strokeWidth="1.500" />
        <path d="M9 4h6v5l-2 2v4h-2v-4L9 9zM10 1v3M14 1v3" fill="#fff" stroke="#fff" />
      </Svg>
      <Svg w={16} h={16}>
        <path d="M4.500 3.500h11v10h-11zM1 1v5h4V1M3 6v9" stroke="#fff" strokeWidth="1.500" />
        <circle cx="10" cy="10" r="4" fill="#3cb6a5" stroke="#d5f2ee" />
      </Svg>
      <Svg w={16} h={16}>
        <path d="M1 6h3l4-4v12l-4-4H1z" fill="#fff" />
        <path d="M10 5c1.500 2 1.500 4 0 6M12.500 3c2.500 3 2.500 7 0 10" stroke="#fff" strokeWidth="1.300" />
      </Svg>
      <div className="w-[80px] pl-1 text-center text-[11px] leading-[17px]">
        <p>16:36</p>
        <p>2016-10-03</p>
      </div>
      <button aria-label="Afficher le bureau" className="-ml-[6px] h-full w-[14px] border border-[#2d4664] bg-linear-to-b from-[#a9bfd8] to-[#5a7ca5]" />
    </div>
  </footer>
);

/* ------------------------ EXPLORER ----------------------- */
const FolderIcon = () => (
  <Svg w={14} h={16}>
    <path d="M1 .500l5-.500v16l-5-1z" fill="#f8e8ac" stroke="#d9bb5f" />
    <path d="M6 3l6-2v12l-6 3z" fill="#e9ca68" stroke="#cfac4c" />
    <path d="M7.500 4v10" stroke="#f6e4a0" />
    <path d="M10.500 9.500h2v3h-2z" fill="#9bc4de" />
  </Svg>
);

const FileIcon = ({ color }: { color: string }) => (
  <Svg w={16} h={16}>
    <path d="M5.500 .5h7l3 3v12h-10z" fill="#fff" stroke="#999" />
    <path d="M9 5.500h5M9 8.500h5M9 11.500h5" stroke={color} />
    <path d="M0 3h8v10H0z" fill={color} />
    <path d="M2 5.500l4 5M6 5.500l-4 5" stroke="#fff" strokeWidth="1.200" />
  </Svg>
);

type SideKind = "star" | "desktop" | "recent" | "cloud" | "download" | "library" | "doc" | "image" | "music" | "video" | "computer" | "disk" | "windisk" | "netdisk" | "network";

const SideIcon = ({ kind }: { kind: SideKind }) => {
  if (kind === "library") return <LibraryIcon size="sm" />;
  return (
    <Svg w={16} h={16}>
      {kind === "star" && <path d="M8 0l2.300 5.300 5.700.5-4.300 3.900L13 15.500 8 12.400 3 15.500l1.300-5.800L0 5.800l5.700-.5z" fill="#f9a72b" stroke="#e2842a" strokeWidth=".7" />}
      {kind === "desktop" && (
        <>
          <path d="M.5 2.500h15v12H.5z" fill="#2f62b5" stroke="#7d8ea8" />
          <path d="M1 3h9L1 11z" fill="#6aa0e2" />
          <path d="M1 12h14v2H1z" fill="#24384f" />
        </>
      )}
      {kind === "recent" && (
        <>
          <path d="M4.500 1.500h10v13h-10z" fill="#eef3f7" stroke="#93a1ae" />
          <path d="M7 5.500h5M7 8.500h5M7 11.500h5" stroke="#6c8fae" />
          <circle cx="4" cy="4" r="3.500" fill="#d9e8f2" stroke="#8a9aa8" />
        </>
      )}
      {kind === "cloud" && <path d="M3 13a3 3 0 0 1 0-6 5 5 0 0 1 9-3l-5 5v4zM8 14a2.500 2.500 0 0 1 0-5 3.500 3.500 0 0 1 6 0 2.500 2.500 0 0 1 0 5z" fill="#1158b8" />}
      {kind === "download" && (
        <>
          <path d="M1 1l7-1v15l-7-1z" fill="#f2dc8c" stroke="#d8b95c" />
          <path d="M7 3l5-1v12l-5 2z" fill="#e8c866" />
          <path d="M10 6h3v5h3l-4.500 5L7 11h3z" fill="#3d9ae0" />
        </>
      )}
      {kind === "doc" && (
        <>
          <path d="M2.500 .5h8l3 3v12h-11z" fill="#fff" stroke="#8897a5" />
          <path d="M5 4.500h4M5 7.500h6M5 10.500h6M5 12.500h6" stroke="#6d93bb" />
        </>
      )}
      {kind === "image" && (
        <>
          <path d="M.5 2.500h15v11H.5z" fill="#fff" stroke="#8897a5" />
          <path d="M2 4h12v8H2z" fill="#7cc3ea" />
          <path d="M2 12V9l5-1 7 2v2z" fill="#3f7d4d" />
        </>
      )}
      {kind === "music" && (
        <>
          <path d="M8 13V1c1 3 6 3 4 8" stroke="#2f9be0" strokeWidth="2" />
          <ellipse cx="5.500" cy="13" rx="4" ry="2.800" fill="#2f9be0" />
        </>
      )}
      {kind === "video" && (
        <>
          <path d="M1 0h14v16H1z" fill="#2b3440" />
          <path d="M4.500 1h7v6h-7zM4.500 8.500h7v6h-7z" fill="#5b9bd5" />
          <path d="M4.500 10l7-3v4z" fill="#c0504d" />
          <path d="M2.500 1v14M13.500 1v14" stroke="#fff" strokeDasharray="1.500 1.500" />
        </>
      )}
      {(kind === "computer" || kind === "network") && (
        <>
          <path d="M4.500 1.500h11v9h-11z" fill="#1f3fc4" stroke="#8a97a8" />
          <path d="M5 2h6L5 8z" fill="#6f93ee" />
          <path d="M8 11h4v3H8zM6 14h8v1.500H6z" fill="#8a97a8" />
          {kind === "computer" && <path d="M0 5h3v10H0z" fill="#9aa8b5" />}
          {kind === "network" && <circle cx="4.500" cy="5" r="4.500" fill="#3fae6d" stroke="#4a9fd8" />}
        </>
      )}
      {(kind === "disk" || kind === "windisk" || kind === "netdisk") && (
        <>
          <path d="M2 7h12l2 3v3H0v-3z" fill="#c9ced3" stroke="#7d858d" />
          <path d="M11 11h3v1.500h-3z" fill="#4caf50" />
          {kind === "windisk" && (
            <>
              <path d="M4 1l4-1v3.500H4z" fill="#e8591c" />
              <path d="M8.500 0L12 1v3H8.500z" fill="#8cc63f" />
              <path d="M4 4h4v3.500L4 7z" fill="#40a0e0" />
              <path d="M8.500 4.500H12V7l-3.500.5z" fill="#fbc41b" />
            </>
          )}
          {kind === "netdisk" && <path d="M7 13h2v2h5v1.500H2V15h5z" fill="#2fa85a" />}
        </>
      )}
    </Svg>
  );
};

const sideGroups: { label: string; kind: SideKind; items: { label: string; kind: SideKind }[] }[] = [
  {
    label: "Favoris",
    kind: "star",
    items: [
      { label: "Bureau", kind: "desktop" },
      { label: "Emplacements récents", kind: "recent" },
      { label: "OneDrive", kind: "cloud" },
      { label: "Téléchargements", kind: "download" },
    ],
  },
  {
    label: "Bibliothèques",
    kind: "library",
    items: [
      { label: "Documents", kind: "doc" },
      { label: "Images", kind: "image" },
      { label: "Musique", kind: "music" },
      { label: "Vidéos", kind: "video" },
    ],
  },
  {
    label: "Ordinateur",
    kind: "computer",
    items: [
      { label: "Acer (C:)", kind: "windisk" },
      { label: "DATA (D:)", kind: "disk" },
      { label: "juniorr (\\\\principal\\S", kind: "netdisk" },
    ],
  },
  { label: "Réseau", kind: "network", items: [] },
];

const files = [
  ["_GCMEQ", "2016-04-04 14:27"],
  ["ACHATS", "2016-02-26 13:16"],
  ["ADMIN", "2016-09-28 11:12"],
  ["ARCHIVES", "2014-11-27 13:58"],
  ["ÉQUIPEMENT ET OUTILLAGE", "2016-10-03 15:03"],
  ["ISO", "2015-09-23 08:59"],
  ["MARKETING", "2016-09-08 12:47"],
  ["OPÉRATION", "2016-09-26 11:57"],
  ["OWNCLOUD", "2014-12-05 10:21"],
  ["PAMT", "2016-09-14 13:30"],
  ["PROJET", "2016-09-29 07:46"],
  ["RÉFÉRENCES", "2016-07-22 11:56"],
  ["SST", "2016-09-21 10:02"],
  ["USERS", "2016-07-05 16:54"],
  ["VACANCES", "2016-07-04 07:38"],
  ["SCHÉMA DU RÉSEAU.docx", "2016-09-14 09:12", "Microsoft Word D...", "101 Ko"],
  ["Traveling.xlsx", "2016-01-20 10:21", "Microsoft Excel W...", "14 Ko"],
];

const Crumb = ({ label }: { label: string }) => (
  <button className="flex items-center gap-[11px]">
    {label}
    <ArrowH color="#000" />
  </button>
);

const AddressBar = () => (
  <header className="relative h-[59px] overflow-hidden border-b border-white bg-linear-to-r from-[#4a7fb5] via-[#2368ae] via-40% to-[#2a6cae]">
    {/* light streaks seen through the glass */}
    <svg className="absolute top-0 right-0" width="340" height="56" viewBox="0 0 340 56" fill="none" aria-hidden="true">
      <defs>
        <filter id="glow">
          <feGaussianBlur stdDeviation="4" />
        </filter>
      </defs>
      <g filter="url(#glow)">
        <path d="M30 60L215-5" stroke="#9edcff" strokeWidth="10" />
        <path d="M90 62L260-5" stroke="#5fa8f0" strokeWidth="12" />
        <path d="M190 60L300-5" stroke="#8cc4ee" strokeWidth="14" />
        <path d="M230 0l10 26M290 0l-20 34" stroke="#a9cdf2" strokeWidth="6" />
      </g>
    </svg>
    <div className="absolute top-0 right-1 flex h-[18px] rounded-b border border-t-0 border-[#27507c] bg-[#8fb2d6]/40">
      <button aria-label="Réduire" className="flex w-7 items-center justify-center border-r border-[#27507c]">
        <Svg w={12} h={5}>
          <path d="M.5 .5h11v4H.5z" fill="#fff" stroke="#4a5f78" />
        </Svg>
      </button>
      <button aria-label="Restaurer" className="flex w-7 items-center justify-center border-r border-[#27507c]">
        <Svg w={12} h={12}>
          <path d="M3.500 .5h8v8h-8z" fill="#fff" stroke="#4a5f78" />
          <path d="M.5 3.500h8v8h-8z" fill="#fff" stroke="#4a5f78" />
          <path d="M3.500 6.500h2v2h-2z" fill="#4a5f78" />
        </Svg>
      </button>
      <button aria-label="Fermer" className="flex w-[45px] items-center justify-center">
        <Svg w={12} h={10}>
          <path d="M1 1l10 8M11 1L1 9" stroke="#4a5f78" strokeWidth="4" />
          <path d="M1 1l10 8M11 1L1 9" stroke="#fff" strokeWidth="2.500" />
        </Svg>
      </button>
    </div>
    <div className="relative mt-[26px] flex h-6 items-center pr-[2px] pl-[5px] text-[11px] text-[#444]">
      <button aria-label="Précédent">
        <Svg w={24} h={24}>
          <circle cx="12" cy="12" r="11" fill="#1b4fa8" stroke="#dbe8f5" strokeWidth="1.500" />
          <path d="M4 8a9 9 0 0 1 16 0c-4 3-12 3-16 0z" fill="#6f9ede" />
          <path d="M13 6l-6 6 6 6M7 12h11" stroke="#fff" strokeWidth="3" />
        </Svg>
      </button>
      <button aria-label="Suivant" className="ml-[2px]">
        <Svg w={24} h={24}>
          <circle cx="12" cy="12" r="11" fill="#7ba0c8" stroke="#c7d8ea" strokeWidth="1.500" />
          <path d="M11 6l6 6-6 6M17 12H6" stroke="#b5cbe2" strokeWidth="3" />
        </Svg>
      </button>
      <button aria-label="Pages récentes" className="ml-1">
        <Caret color="#143a66" />
      </button>
      <div className="ml-[6px] flex h-[23px] flex-1 items-center border border-[#24466e] bg-[#c4d6ea] pl-[5px] shadow-[0_0_0_1px_#8fb4da]">
        <Svg w={12} h={16}>
          <path d="M2 1l5-1v12l-5-1zM6 2l4-1v10l-4 1z" fill="#f0d57c" stroke="#cfae4e" />
          <path d="M0 14h12M6 12v3" stroke="#2fa85a" strokeWidth="2" />
        </Svg>
        <div className="ml-2 flex items-center gap-[9px]">
          <ArrowH color="#000" />
          <Crumb label="Réseau" />
          <Crumb label="principal" />
          <Crumb label="Techeol" />
        </div>
        <button aria-label="Emplacements précédents" className="ml-auto flex h-full w-5 items-center justify-center">
          <Caret color="#1a2f4d" />
        </button>
        <button aria-label="Actualiser" className="flex h-full w-6 items-center justify-center border-l border-[#24466e]">
          <Svg w={14} h={13}>
            <path d="M5 1C2 2 3 5 4 8M1 6l3 3 3-3M9 12c3-1 2-4 1-7M7 7l3-3 3 3" stroke="#2c6fc0" strokeWidth="2" />
          </Svg>
        </button>
      </div>
      <div className="ml-[7px] flex h-[23px] w-[241px] items-center border border-[#24466e] bg-[#c4d6ea]/90 pr-[5px] pl-2 shadow-[0_0_0_1px_#8fb4da]">
        <input
          aria-label="Rechercher"
          placeholder="Rechercher dans : Techeol"
          className="min-w-0 flex-1 outline-none placeholder:text-[#6b7580] placeholder:italic"
        />
        <Svg w={13} h={13}>
          <circle cx="8" cy="5" r="4" stroke="#2c6fc0" strokeWidth="1.800" />
          <path d="M5 8l-4 4" stroke="#2c6fc0" strokeWidth="2.500" />
        </Svg>
      </div>
    </div>
    <div className="absolute inset-x-0 bottom-0 h-[2px] border-t border-[#1b3f66] bg-[#d5e0ee]" />
  </header>
);

const Toolbar = () => (
  <div className="flex h-[31px] items-center border-b border-[#9fb5cf] bg-linear-to-b from-[#f9fcfe] via-[#eaf1fa] to-[#dae5f4] pr-[15px] pl-[18px] text-[11px] text-[#1e395b]">
    <button className="flex w-[95px] items-center gap-[6px]">
      Organiser
      <Caret color="#1e395b" />
    </button>
    <button className="flex w-[83px] items-center gap-1">
      <LibraryIcon size="sm" />
      Ouvrir
    </button>
    <button className="w-16 text-left">Graver</button>
    <button>Nouveau dossier</button>
    <button aria-label="Changer l'affichage" className="ml-auto flex items-center gap-[10px]">
      <Svg w={16} h={13}>
        <path d="M1.500 1.500h2v2h-2zM1.500 5.500h2v2h-2zM1.500 9.500h2v2h-2z" stroke="#888" />
        <path d="M6 2.500h4M12 2.500h4M6 6.500h4M12 6.500h4M6 10.500h4M12 10.500h4" stroke="#555" />
      </Svg>
      <Caret color="#1a2f4d" />
    </button>
    <button aria-label="Volet de visualisation" className="ml-[22px]">
      <Svg w={16} h={14}>
        <path d="M.5 .5h15v13H.5z" fill="#fff" stroke="#5f7f9f" />
        <path d="M10 1h5v12h-5z" fill="#7cc6e8" />
        <path d="M1 2.500h9" stroke="#5f7f9f" />
      </Svg>
    </button>
    <button
      aria-label="Aide"
      className="ml-5 h-4 w-4 rounded-full border border-[#7d8ea8] bg-[#1f3fa8] text-[10px] leading-[14px] font-bold text-white">
      ?
    </button>
  </div>
);

const SideItem = ({ label, kind, child, active }: { label: string; kind: SideKind; child?: boolean; active?: boolean }) => (
  <button
    className={clsx(
      "flex h-[21px] w-full items-center gap-[5px] overflow-hidden whitespace-nowrap",
      child ? "pl-[29px]" : "pl-[19px]",
      active && "rounded-sm border border-[#d9d9d9] bg-linear-to-b from-[#f8f8f8] to-[#e5e5e5]",
    )}>
    <SideIcon kind={kind} />
    {label}
  </button>
);

const Explorer = () => (
  <div className="flex flex-col bg-[#fcfcfc] text-[11px]">
    <AddressBar />
    <Toolbar />
    <div className="flex min-h-[625px] text-black">
      <nav className="flex w-[159px] shrink-0 flex-col gap-[21px] overflow-hidden border-r border-[#d6e5f5] pt-[11px] pl-px">
        {sideGroups.map((group) => (
          <div key={group.label}>
            <SideItem label={group.label} kind={group.kind} active={group.label === "Réseau"} />
            {group.items.map((item) => (
              <SideItem key={item.label} label={item.label} kind={item.kind} child />
            ))}
          </div>
        ))}
      </nav>
      <div className="ml-[15px]">
        <table className="w-[573px] table-fixed border-separate border-spacing-0 text-left text-[#6d6d6d]">
          <thead className="text-[#4c607a]">
            <tr className="h-[22px]">
              <th scope="col" className="relative w-[257px] border-r border-[#e3e8ee] p-0 pt-1 pl-[3px] font-normal">
                Nom
                <span className="absolute top-[1px] left-[124px]">
                  <Caret up color="#7ba7c9" />
                </span>
              </th>
              <th scope="col" className="w-[120px] border-r border-[#e3e8ee] p-0 pt-1 pl-[7px] font-normal">Modifié le</th>
              <th scope="col" className="w-[120px] border-r border-[#e3e8ee] p-0 pt-1 pl-[7px] font-normal">Type</th>
              <th scope="col" className="border-r border-[#e3e8ee] p-0 pt-1 pl-[7px] font-normal">Taille</th>
            </tr>
            <tr className="h-[11px]" />
          </thead>
          <tbody>
            {files.map(([name, date, type, size]) => {
              const active = name === "PROJET";
              const cell = active
                ? "border-y border-[#d9d9d9] bg-linear-to-b from-[#fafafa] to-[#e6e6e6]"
                : "";
              return (
                <tr key={name} className="h-[21px]">
                  <td className={clsx("p-0 pl-1 text-black", cell, active && "rounded-l-sm border-l pl-[3px]")}>
                    <span className="flex items-center gap-[6px]">
                      <span className="flex w-[14px]">
                        {type ? <FileIcon color={name.endsWith("docx") ? "#2b579a" : "#217346"} /> : <FolderIcon />}
                      </span>
                      {name}
                    </span>
                  </td>
                  <td className={clsx("p-0 pl-[7px]", cell)}>{date}</td>
                  <td className={clsx("p-0 pl-[7px]", cell)}>{type ?? "Dossier de fichiers"}</td>
                  <td className={clsx("p-0 pr-1 text-right", cell, active && "rounded-r-sm border-r")}>{size}</td>
                </tr>
              );
            })}
          </tbody>
        </table>
      </div>
    </div>
    <footer className="flex h-[53px] border-t-2 border-[#cfdded] bg-[#f0f4fb] pt-[5px] pl-[21px] leading-[18px] text-[#5a6b80]">
      <Svg w={34} h={44} box="0 3 34 44">
        <path d="M10 2h14v36H10z" fill="#f2e08e" />
        <path d="M14 9l18 2v33l-4 1-14-8z" fill="#fff" stroke="#ddd" />
        <path d="M12 15h5v26h-5zM19 14h6v27h-6z" fill="#fff" stroke="#cfcfcf" />
        <path d="M14 19v20M22 18v22" stroke="#5fae7d" strokeWidth="3" strokeDasharray="2 2" />
        <path d="M0 2l10 6v38L2 40z" fill="#ecd36f" stroke="#d9bd55" />
      </Svg>
      <div className="ml-[22px] w-[101px] whitespace-nowrap">
        <p className="text-black">PROJET</p>
        <p>Dossier de fichiers</p>
      </div>
      <dl className="grid grid-cols-[89px_1fr] content-start gap-x-[5px] text-right whitespace-nowrap">
        <dt>Modifié le :</dt>
        <dd className="text-left text-[#1e395b]">2016-09-29 07:46</dd>
        <dt>Hors connexion :</dt>
        <dd className="text-left text-[#1e395b]">Non disponible</dd>
      </dl>
      <p className="ml-[50px]">
        État hors connexio... <span className="ml-[2px] text-[#1e395b]">Connecté</span>
      </p>
    </footer>
  </div>
);

export default function App() {
  return (
    <div className="grid h-screen grid-cols-[24fr_17fr] items-start overflow-hidden bg-black font-['Open_Sans','Noto_Sans',sans-serif]">
      <div className="flex h-screen min-w-0 flex-col overflow-hidden pt-[31px]">
        <TitleBar />
        <Ribbon />
        <FormulaBar />
        <Sheet />
        <SheetTabs />
        <StatusBar />
        <Taskbar />
      </div>
      <Explorer />
    </div>
  );
}
